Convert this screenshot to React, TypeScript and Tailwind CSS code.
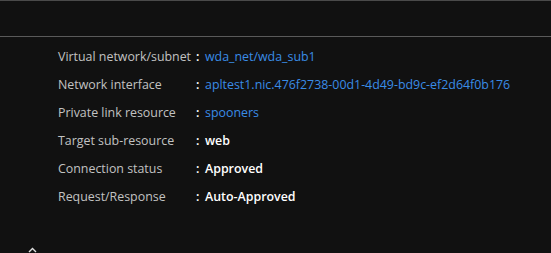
const rows: { label: string; value: string; link?: boolean }[] = [
  { label: 'Virtual network/subnet', value: 'wda_net/wda_sub1', link: true },
  { label: 'Network interface', value: 'apltest1.nic.476f2738-00d1-4d49-bd9c-ef2d64f0b176', link: true },
  { label: 'Private link resource', value: 'spooners', link: true },
  { label: 'Target sub-resource', value: 'web' },
  { label: 'Connection status', value: 'Approved' },
  { label: 'Request/Response', value: 'Auto-Approved' },
];

export default function App() {
  return (
    <div
      className="w-[551px] h-[253px] bg-[#111111] overflow-hidden flex flex-col border-t border-[#4a4a4a]"
      style={{ fontFamily: '"Segoe UI", "Open Sans", sans-serif' }}
    >
      {/* header strip */}
      <div className="h-[36px] shrink-0 border-b border-[#5a5a5a]" />

      {/* properties */}
      <div className="pt-[6px] pl-[58px] flex flex-col text-[12.4px]">
        {rows.map((r) => (
          <div key={r.label} className="flex items-center h-[28px] whitespace-nowrap">
            <span className="w-[138px] text-[#c2c2c2]">{r.label}</span>
            <span className="w-[9px] text-white font-semibold">:</span>
            {r.link ? (
              <a className="text-[#3a8ce6] cursor-pointer">{r.value}</a>
            ) : (
              <span className="text-white font-semibold">{r.value}</span>
            )}
          </div>
        ))}
      </div>

      <div className="flex-1" />
      <div className="pl-[28px] h-[6px] overflow-visible">
        <svg width="9" height="6" viewBox="0 0 9 6" className="block">
          <path d="M1 5 L4.5 1.5 L8 5" stroke="#e0e0e0" strokeWidth="1.4" fill="none" />
        </svg>
      </div>
    </div>
  );
}
